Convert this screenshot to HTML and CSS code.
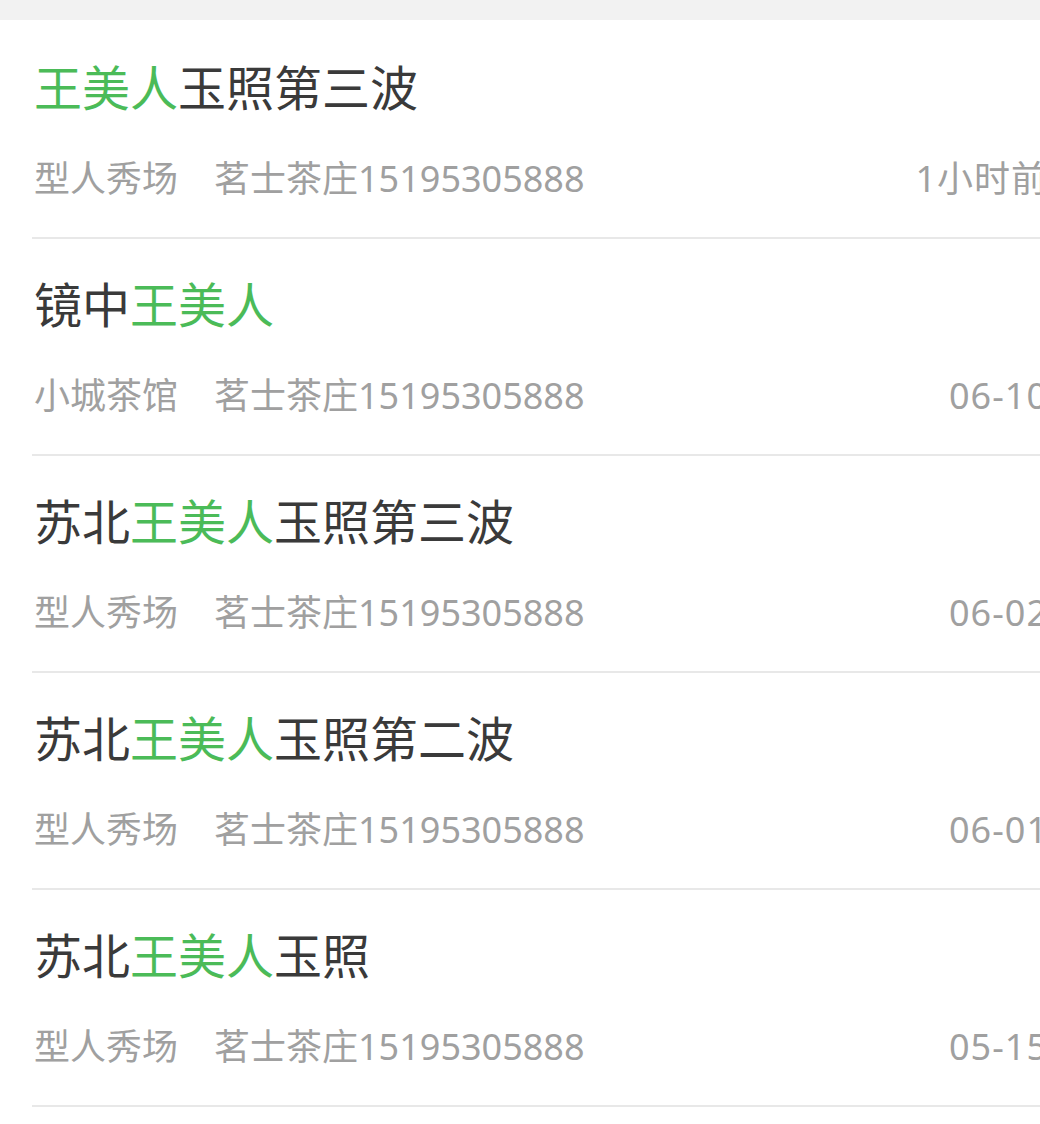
FILE: index.html
```html
<!DOCTYPE html>
<html lang="zh-CN">
<head>
<meta charset="UTF-8" />
<meta name="viewport" content="width=device-width, initial-scale=1" />
<title>搜索结果</title>
<link rel="stylesheet" href="styles.css">
</head>
<body>
  <div class="topbar"></div>

  <ul class="results">
    <li class="item">
      <h2 class="title"><em>王美人</em>玉照第三波</h2>
      <div class="meta">
        <span class="shop">型人秀场</span>
        <span class="owner">茗士茶庄15195305888</span>
        <span class="time">1小时前</span>
      </div>
    </li>
    <li class="item">
      <h2 class="title">镜中<em>王美人</em></h2>
      <div class="meta">
        <span class="shop">小城茶馆</span>
        <span class="owner">茗士茶庄15195305888</span>
        <span class="time">06-10</span>
      </div>
    </li>
    <li class="item">
      <h2 class="title">苏北<em>王美人</em>玉照第三波</h2>
      <div class="meta">
        <span class="shop">型人秀场</span>
        <span class="owner">茗士茶庄15195305888</span>
        <span class="time">06-02</span>
      </div>
    </li>
    <li class="item">
      <h2 class="title">苏北<em>王美人</em>玉照第二波</h2>
      <div class="meta">
        <span class="shop">型人秀场</span>
        <span class="owner">茗士茶庄15195305888</span>
        <span class="time">06-01</span>
      </div>
    </li>
    <li class="item">
      <h2 class="title">苏北<em>王美人</em>玉照</h2>
      <div class="meta">
        <span class="shop">型人秀场</span>
        <span class="owner">茗士茶庄15195305888</span>
        <span class="time">05-15</span>
      </div>
    </li>
  </ul>
</body>
</html>
```

FILE: styles.css
```css
/* Reset & base */
* {
  box-sizing: border-box;
}
html, body {
  overflow: hidden;
}
body {
  margin: 0;
  background: #fff;
  font-family: "Noto Sans", "Noto Sans CJK SC", sans-serif;
  color: #3a3a3a;
}

.topbar {
  height: 20px;
  background: #f2f2f2;
}

/* Result list */
.results {
  list-style: none;
  margin: 0;
  padding: 2px 0 0;
  width: 1080px;
}
.item {
  margin-left: 32px;
  padding: 40px 32px 38px 2px;
  border-bottom: 2px solid #e8e8e8;
}
.title {
  margin: 0;
  font-size: 48px;
  font-weight: 400;
  line-height: 52px;
  color: #3a3a3a;
  white-space: nowrap;
}
.title em {
  font-style: normal;
  color: #4bbb58;
}

.meta {
  display: flex;
  align-items: center;
  margin-top: 45px;
  font-size: 36px;
  line-height: 40px;
  color: #a0a0a0;
  white-space: nowrap;
}
.owner {
  margin-left: 36px;
}
.time {
  margin-left: auto;
  letter-spacing: 1px;
}
```
